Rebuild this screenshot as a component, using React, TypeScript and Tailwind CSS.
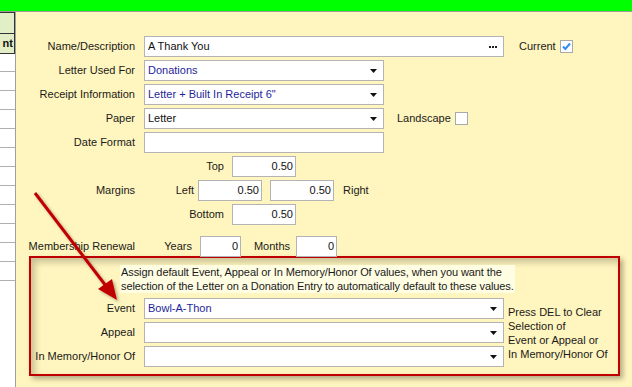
import React from "react";

const blue = "text-[#1f1f9a]";

function Arrow() {
  return (
    <svg width="7" height="4" viewBox="0 0 7 4" className="shrink-0">
      <path d="M0 0 H7 L3.5 4 Z" fill="#111" />
    </svg>
  );
}

function Box({
  w,
  value,
  color = "text-[#111]",
  dropdown,
  dots,
  right,
  h = "h-[21px]",
}: {
  w: string;
  value?: string;
  color?: string;
  dropdown?: boolean;
  dots?: boolean;
  right?: boolean;
  h?: string;
}) {
  return (
    <div
      className={`${w} ${h} shrink-0 bg-white border border-[#b3b3b3] flex items-center ${
        right ? "justify-end pr-[2px]" : "justify-between pl-[3px] pr-[6px]"
      }`}
    >
      <span className={`${color} whitespace-nowrap`}>{value}</span>
      {dropdown && <Arrow />}
      {dots && (
        <div className="flex gap-[1px] mt-[1px]">
          <div className="w-[2px] h-[2px] bg-[#222]" />
          <div className="w-[2px] h-[2px] bg-[#222]" />
          <div className="w-[2px] h-[2px] bg-[#222]" />
        </div>
      )}
    </div>
  );
}

function Check({ checked }: { checked?: boolean }) {
  return (
    <div className="w-[13px] h-[13px] bg-white border border-[#a9a9a9] flex items-center justify-center">
      {checked && (
        <svg width="11" height="11" viewBox="0 0 11 11">
          <path d="M2 5.5 L4.3 8 L9 2.5" fill="none" stroke="#2e8ff0" strokeWidth="2" />
        </svg>
      )}
    </div>
  );
}

function Row({ label, children }: { label: string; children?: React.ReactNode }) {
  return (
    <div className="flex items-center h-[21px]">
      <div className="w-[119px] text-right whitespace-nowrap">{label}</div>
      <div className="ml-[9px] flex items-center">{children}</div>
    </div>
  );
}

export default function App() {
  return (
    <div className="relative w-[632px] h-[387px] overflow-hidden bg-[#FFF5BE] font-['Liberation_Sans',Arial,sans-serif] text-[11px] text-[#1a1a1a]">
      {/* Top bar */}
      <div className="h-[11px] bg-[#00FF00]" />
      <div className="h-px bg-[#9a9a9a]" />

      <div className="flex h-[375px]">
        {/* Left grid strip */}
        <div className="w-[16px] shrink-0 bg-white border-r border-[#a0a0a0] overflow-hidden">
          <div className="h-[22px] bg-[#E2EEC5] border-y border-r border-[#333]" />
          <div className="h-[20px] bg-[#E2EEC5] border-b border-r border-[#333] flex items-center justify-end font-bold text-[11px] text-[#111] pr-[1px] whitespace-nowrap">
            nt
          </div>
          <div className="h-[18px] border-b border-[#b0b0b0]" />
          {Array.from({ length: 11 }).map((_, i) => (
            <div key={i} className="h-[19px] border-b border-[#b0b0b0]" />
          ))}
        </div>

        {/* Main form */}
        <div className="flex-1 pt-[24px]">
          <div className="flex flex-col gap-[3px]">
            <Row label="Name/Description">
              <Box w="w-[360px]" value="A Thank You" dots />
              <span className="ml-[15px]">Current</span>
              <div className="ml-[4px]">
                <Check checked />
              </div>
            </Row>
            <Row label="Letter Used For">
              <Box w="w-[240px]" value="Donations" color={blue} dropdown />
            </Row>
            <Row label="Receipt Information">
              <Box w="w-[240px]" value={'Letter + Built In Receipt 6"'} color={blue} dropdown />
            </Row>
            <Row label="Paper">
              <Box w="w-[240px]" value="Letter" dropdown />
              <span className="ml-[13px]">Landscape</span>
              <div className="ml-[4px]">
                <Check />
              </div>
            </Row>
            <Row label="Date Format">
              <Box w="w-[240px]" />
            </Row>
            <Row label="">
              <div className="w-[80px] text-right">Top</div>
              <div className="ml-[8px]">
                <Box w="w-[64px]" value="0.50" right />
              </div>
            </Row>
            <Row label="Margins">
              <div className="w-[50px] text-right">Left</div>
              <div className="ml-[4px]">
                <Box w="w-[64px]" value="0.50" right />
              </div>
              <div className="ml-[8px]">
                <Box w="w-[64px]" value="0.50" right />
              </div>
              <span className="ml-[9px]">Right</span>
            </Row>
            <Row label="">
              <div className="w-[80px] text-right">Bottom</div>
              <div className="ml-[8px]">
                <Box w="w-[64px]" value="0.50" right />
              </div>
            </Row>
          </div>

          <div className="flex items-center h-[20px] mt-[11px]">
            <div className="w-[119px] text-right whitespace-nowrap">Membership Renewal</div>
            <div className="ml-[9px] w-[48px] text-right">Years</div>
            <div className="ml-[8px]">
              <Box w="w-[41px]" value="0" right />
            </div>
            <div className="w-[49px] text-right">Months</div>
            <div className="ml-[6px]">
              <Box w="w-[41px]" value="0" right />
            </div>
          </div>

          {/* Defaults box */}
          <div className="ml-[13px] w-[591px] h-[120px] border-2 border-[#C00000] pt-[7px] shadow-[3px_3px_5px_rgba(0,0,0,0.3),inset_4px_4px_7px_rgba(0,0,0,0.22)]">
            <div className="ml-[89px] w-fit bg-[#FFFDE2] leading-[14px] px-[1px] tracking-[-0.1px]">
              Assign default Event, Appeal or In Memory/Honor Of values, when you want the
              <br />
              selection of the Letter on a Donation Entry to automatically default to these values.
            </div>
            <div className="flex mt-[5px]">
              <div className="flex flex-col gap-[3px]">
                {[
                  { l: "Event", v: "Bowl-A-Thon" },
                  { l: "Appeal", v: "" },
                  { l: "In Memory/Honor Of", v: "" },
                ].map((r) => (
                  <div key={r.l} className="flex items-center h-[21px]">
                    <div className="w-[104px] text-right whitespace-nowrap">{r.l}</div>
                    <div className="ml-[9px]">
                      <Box w="w-[360px]" value={r.v} color={blue} dropdown />
                    </div>
                  </div>
                ))}
              </div>
              <div className="ml-[4px] pt-[7px] leading-[14px] whitespace-nowrap">
                Press DEL to Clear
                <br />
                Selection of
                <br />
                Event or Appeal or
                <br />
                In Memory/Honor Of
              </div>
            </div>
          </div>
        </div>
      </div>

      {/* Annotation arrow */}
      <svg className="absolute inset-0 pointer-events-none" width="632" height="387">
        <defs>
          <filter id="sh" x="-20%" y="-20%" width="140%" height="140%">
            <feDropShadow dx="2" dy="2" stdDeviation="1.5" floodColor="#000" floodOpacity="0.3" />
          </filter>
        </defs>
        <g filter="url(#sh)">
          <line x1="35" y1="193" x2="106" y2="286" stroke="#C00000" strokeWidth="3" />
          <path d="M117 300 L98 289 L112 279 Z" fill="#C00000" />
        </g>
      </svg>
    </div>
  );
}
